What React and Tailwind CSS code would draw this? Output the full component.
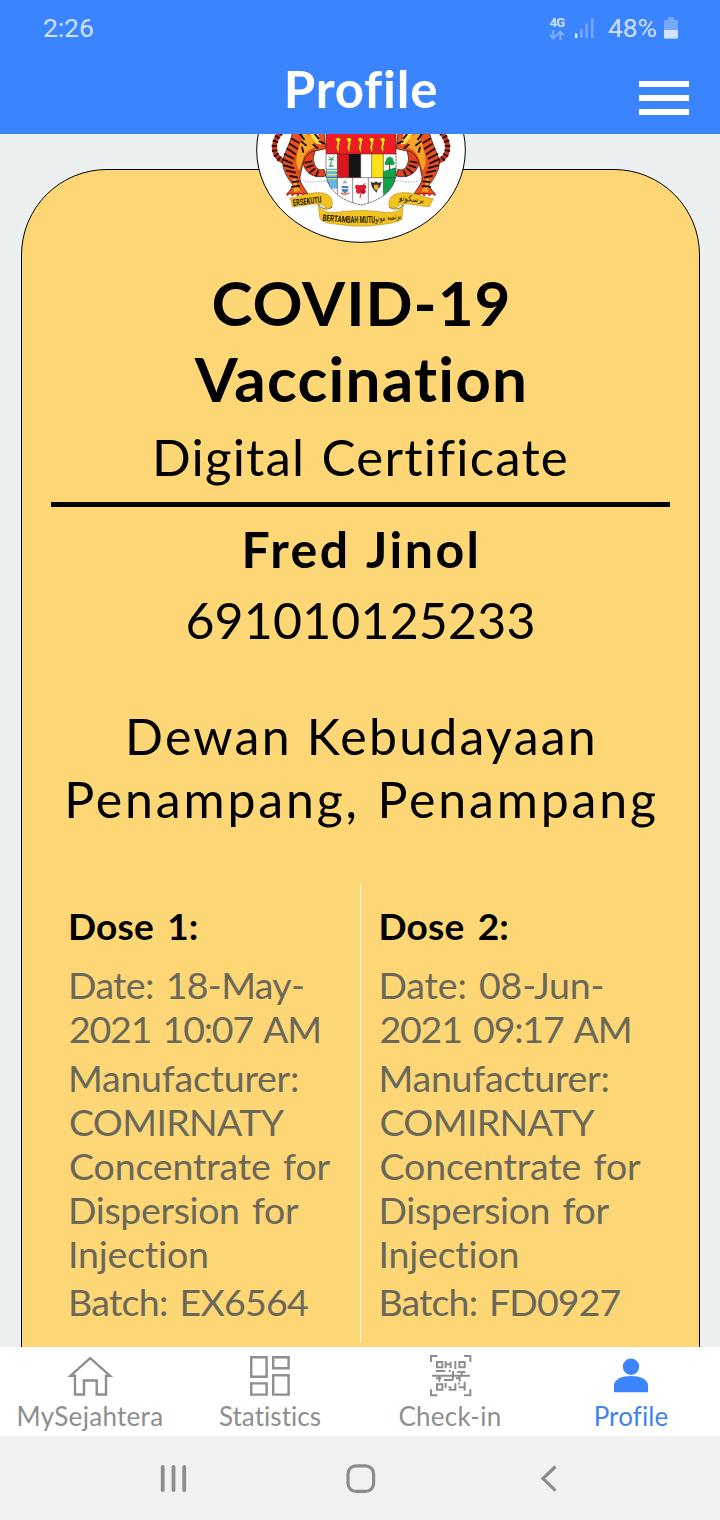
import React from "react";

const DOSES = [
  {
    title: "Dose 1:",
    date: [
      { text: "Date: 18-May-", cls: "tracking-[-0.65px]" },
      { text: "2021 10:07 AM", cls: "pl-px tracking-[-1.2px]" },
    ],
    batch: { text: "Batch: EX6564", cls: "tracking-[-0.72px]" },
  },
  {
    title: "Dose 2:",
    date: [
      { text: "Date: 08-Jun-", cls: "tracking-[-0.17px]" },
      { text: "2021 09:17 AM", cls: "pl-px tracking-[-1.2px]" },
    ],
    batch: { text: "Batch: FD0927", cls: "tracking-[-0.87px]" },
  },
];

const MANUFACTURER = [
  { text: "Manufacturer:", cls: "tracking-[-0.25px]" },
  { text: "COMIRNATY", cls: "pl-px tracking-[-0.65px]" },
  { text: "Concentrate for", cls: "pl-px tracking-[-0.15px]" },
  { text: "Dispersion for", cls: "tracking-[-0.35px]" },
  { text: "Injection", cls: "tracking-[-0.2px]" },
];

function Lines({ items, className = "" }) {
  return (
    <p className={`text-[37.5px] leading-[44px] text-[#6b6859] [word-spacing:3px] ${className}`}>
      {items.map((l) => (
        <span key={l.text} className={`block whitespace-nowrap ${l.cls}`}>
          {l.text}
        </span>
      ))}
    </p>
  );
}

function Dose({ dose, className }) {
  return (
    <section className={`pt-5 pb-[18.5px] ${className}`}>
      <h3 className="text-[37px] leading-[44px] font-bold text-black tracking-[0.2px] [word-spacing:4px]">{dose.title}</h3>
      <Lines items={dose.date} className="mt-[14.5px]" />
      <Lines items={MANUFACTURER} className="mt-[5.5px]" />
      <Lines items={[dose.batch]} className="mt-[3.5px]" />
    </section>
  );
}

function Tiger() {
  return (
    <g>
      <path d="M92 8C72 28 66 62 84 82C92 92 104 94 116 92" fill="none" stroke="#c8321e" strokeWidth="15" />
      <path d="M92 8C72 28 66 62 84 82C92 92 104 94 116 92" fill="none" stroke="#1c0d08" strokeWidth="17" strokeDasharray="5 9" />
      <path d="M156 80C158 118 178 148 228 138L222 118C204 124 192 112 190 84L196 58L160 60Z" fill="#e2431f" stroke="#1c0d08" strokeWidth="2" />
      <path d="M128 6H222L227 56L200 62C176 62 164 80 158 104L150 140C148 158 162 172 174 192H112L130 166C112 144 94 116 99 88C108 60 120 40 128 6Z" fill="#e8501f" stroke="#1c0d08" strokeWidth="2" />
      <path d="M160 6L186 20L196 52C180 56 168 66 160 84L148 122C138 110 136 90 144 62Z" fill="#f7a325" />
      <path d="M176 8L204 10L214 44L196 40Z" fill="#ffe04a" />
      <path d="M128 150C136 140 142 150 140 166L152 184L132 186Z" fill="#f7a325" />
      <g fill="none" stroke="#1c0d08" strokeWidth="5.500" strokeLinecap="round">
        <path d="M126 26L146 38M120 42L142 56M112 56L136 72M104 72L130 86M100 88L126 100M102 106L130 114M110 122L136 128M120 138L142 142M150 12L162 28M154 34L168 46M156 52L160 66M196 14L206 26M208 34L222 40M190 44L202 54" />
        <path d="M128 156L146 154M126 170L148 168M166 98L184 94M170 112L188 106M180 128L194 116M198 138L204 124" />
      </g>
      <path d="M148 120C146 148 160 158 190 156C212 156 226 146 236 160" fill="none" stroke="#555" strokeWidth="1.5" strokeDasharray="4 4" />
      <path d="M116 188L110 196M130 190L126 198M146 190L142 198M162 188L160 196" stroke="#d8261c" strokeWidth="6" />
    </g>
  );
}

function Keris({ x }) {
  return (
    <path
      d={`M${x - 9} 27C${x - 2} 21 ${x + 6} 23 ${x + 7} 30L${x + 3} 35C${x + 7} 42 ${x - 2} 48 ${x + 2} 56L${x} 69L${x - 5} 56C${x - 8} 48 ${x} 42 ${x - 4} 35Z`}
      fill="#ffe11a"
      stroke="#5b3b00"
      strokeWidth="1"
    />
  );
}

function Emblem() {
  return (
    <svg className="absolute -top-1 left-[250px] h-[120px] w-[220px] overflow-visible" viewBox="0 0 660 360">
      <defs>
        <clipPath id="shield">
          <path d="M228 0H438V128C438 176 396 212 333 225C270 212 228 176 228 128Z" />
        </clipPath>
      </defs>
      <ellipse cx="333" cy="60" rx="313" ry="277" fill="#fff" stroke="#000" strokeWidth="3" />
      <Tiger />
      <g transform="matrix(-1 0 0 1 666 0)">
        <Tiger />
      </g>
      <g clipPath="url(#shield)">
        <rect x="228" width="210" height="230" fill="#fff" />
        <rect x="228" width="210" height="72" fill="#ee1c25" />
        <rect x="262" y="72" width="35" height="71" fill="#d8181f" />
        <rect x="297" y="72" width="35" height="71" fill="#161316" />
        <rect x="365" y="72" width="35" height="71" fill="#ffe216" />
        <rect x="228" y="116" width="34" height="60" fill="#5fb8e6" />
        <path d="M228 122H262M228 134H262M228 146H262" stroke="#f4e66a" strokeWidth="4" />
        <path d="M242 110L244 86M244 86L236 80M244 86L253 80M244 86L235 90M244 86L253 91M236 108H252" stroke="#1f9447" strokeWidth="3" fill="none" />
        <path d="M400 124L438 112V230H400Z" fill="#12a04b" />
        <circle cx="419" cy="92" r="11" fill="#12a04b" />
        <circle cx="411" cy="99" r="7" fill="#12a04b" />
        <circle cx="427" cy="99" r="7" fill="#12a04b" />
        <path d="M419 98V120" stroke="#4b3a12" strokeWidth="3" />
        <path d="M228 72H438M228 143H438M262 72V200M297 72V143M332 72V143M365 72V143M400 72V190M308 143V225M355 143V225" stroke="#222" strokeWidth="1.5" />
        <path d="M275 168H295V176C295 186 285 190 285 190C285 190 275 186 275 176Z" fill="#4a7fc8" />
        <path d="M275 176H295" stroke="#fff" strokeWidth="3" />
        <path d="M277 160L285 150L293 160Z" fill="#9aa8c8" />
        <path d="M272 188C280 194 290 194 298 188" stroke="#e1603a" strokeWidth="4" fill="none" />
        <circle cx="332" cy="173" r="8" fill="#e01b2e" />
        <circle cx="322" cy="171" r="7" fill="#e01b2e" />
        <circle cx="342" cy="171" r="7" fill="#e01b2e" />
        <circle cx="326" cy="183" r="8" fill="#e01b2e" />
        <circle cx="339" cy="184" r="8" fill="#c8142a" />
        <path d="M333 190L330 204M338 166L346 160" stroke="#e01b2e" strokeWidth="3" />
        <path d="M362 156L372 158L378 154L384 158L395 156L390 172L383 176L380 188L374 182L366 172Z" fill="#3a3230" />
        <path d="M372 164H385V174L378 182L372 174Z" fill="#e9b424" />
      </g>
      <path d="M228 0H438V128C438 176 396 212 333 225C270 212 228 176 228 128Z" fill="none" stroke="#222" strokeWidth="2" strokeDasharray="7 2" />
      {[265, 298, 332, 366, 399].map((x) => (
        <Keris key={x} x={x} />
      ))}
      <g fill="#f3c31f" stroke="#7a5a06" strokeWidth="1">
        <path d="M128 231L120 204C150 202 172 186 212 188C240 190 252 206 246 232L226 234C222 226 214 222 200 222C176 222 160 228 128 231Z" />
        <path d="M538 231L550 206C516 202 494 186 454 188C426 190 412 206 418 232L440 234C444 226 452 222 466 222C490 222 506 228 538 231Z" />
        <path d="M204 222C212 246 240 250 268 246C310 240 356 240 398 246C426 250 452 246 460 222L456 268C440 278 416 282 392 284C350 290 312 290 272 284C246 282 222 280 210 268Z" />
      </g>
      <path d="M206 224C218 242 236 238 246 232M460 224C446 242 430 238 418 232" fill="none" stroke="#8a6a08" strokeWidth="3" />
      <g fill="#1d1708" className="font-['Roboto']" fontWeight="700">
        <text x="130" y="228" fontSize="27" transform="rotate(-7 130 228)" textLength="86" lengthAdjust="spacingAndGlyphs">ERSEKUTU</text>
        <text x="217" y="272" fontSize="27" transform="rotate(5 217 272)" textLength="74" lengthAdjust="spacingAndGlyphs">BERTAM</text>
        <text x="291" y="279" fontSize="27" textLength="84" lengthAdjust="spacingAndGlyphs">BAH MUTU</text>
      </g>
      <g fill="#1d1708" className="font-['DejaVu_Sans']">
        <text x="376" y="275" fontSize="27" transform="rotate(-7 376 275)" textLength="78" lengthAdjust="spacingAndGlyphs">برتمبه موتو</text>
        <text x="446" y="211" fontSize="25" transform="rotate(6 446 211)" textLength="76" lengthAdjust="spacingAndGlyphs">برسكوتو</text>
      </g>
    </svg>
  );
}

function StatusBar() {
  return (
    <div className="flex h-14 items-center pr-[42px] pl-[43px] font-['Roboto'] text-[#cfe0ff]">
      <span className="flex-1 text-[26.5px] leading-none tracking-[-0.1px]">2:26</span>
      <span className="flex w-4 flex-col items-center gap-px">
        <span className="text-[13px] leading-[12px] font-bold tracking-[-0.6px]">4G</span>
        <svg className="h-[10px] w-4" viewBox="0 0 16 10" fill="none" stroke="#86b1ff" strokeWidth="1.8">
          <path d="M4.3 0V8M1 5L4.3 8.4L7.6 5M11.3 10V1.8M8 5L11.3 1.6L14.6 5" />
        </svg>
      </span>
      <svg className="ml-[9px] h-[21px] w-5" viewBox="0 0 20 21">
        <rect x="1" y="15.5" width="2.3" height="4.5" fill="#eaf2ff" />
        <path d="M6.2 11h2.4v9H6.200zM11.400 5.500h2.400v14.500h-2.400zM17 .5h2.400v19.500H17z" fill="#7aa9ff" />
      </svg>
      <span className="ml-[14px] w-[49px] text-[26.5px] leading-none tracking-[-0.2px]">48%</span>
      <svg className="ml-[7px] h-[22px] w-[14px]" viewBox="0 0 14 22">
        <path d="M4 0h6v3h3a1 1 0 0 1 1 1v16.500a1 1 0 0 1-1 1H1a1 1 0 0 1-1-1V4a1 1 0 0 1 1-1h3z" fill="#76a8ff" />
        <path d="M0 13h14v7.500a1 1 0 0 1-1 1H1a1 1 0 0 1-1-1z" fill="#d3e3ff" />
      </svg>
    </div>
  );
}

function HomeIcon() {
  return (
    <svg className="h-[46px] w-[50px]" viewBox="65 1353 50 46" fill="none" stroke="#8e8e8e" strokeWidth="2.4">
      <path d="M90.200 1358.200L110 1375.700H106V1394.500H96.700V1380.500H84V1394.500H75V1375.700H70.500Z" />
    </svg>
  );
}

function StatsIcon() {
  return (
    <svg className="h-[46px] w-[50px]" viewBox="245 1353 50 46" fill="none" stroke="#8e8e8e" strokeWidth="2.4">
      <path d="M251.200 1357.200h15.400v19.600h-15.400zM251.200 1383.400h15.400v11.200h-15.400zM273.200 1357.200h15.400v11h-15.400zM273.200 1375.200h15.400v19.400h-15.400z" />
    </svg>
  );
}

function QrIcon() {
  return (
    <svg className="h-[46px] w-[50px]" viewBox="-15 -6 150 138" fill="none" stroke="#8e8e8e" strokeWidth="6">
      <path d="M3 21V3H22M102 3H121V21M3 103V121H22M102 121H121V103" strokeWidth="6" />
      <path d="M21 21H37V37H21ZM88 21H104V37H88ZM21 88H37V104H21Z" />
      <path d="M47 18V39M47 28H62M62 20V39M76 18V42" />
      <path d="M18 48H46M56 48H62M69 48V72M82 51H106M95 51V60" />
      <path d="M6 62H120" />
      <path d="M18 70H34M28 62V80M42 75H70M89 62V80M78 70H88" />
      <path d="M47 84V98M56 96L64 98M56 104H76V85M84 86H90M86 97H104M104 80V107" />
    </svg>
  );
}

function PersonIcon() {
  return (
    <svg className="h-[46px] w-[50px]" viewBox="606 1353 50 46" fill="#3a84ff">
      <circle cx="631" cy="1366.700" r="8.200" />
      <path d="M614 1392.200V1385.500C614 1379 622.500 1376 631 1376S648 1379 648 1385.500V1392.200Z" />
    </svg>
  );
}

const TABS = [
  { label: "MySejahtera", Icon: HomeIcon, cls: "text-[#8e8e8e] tracking-[0.3px]" },
  { label: "Statistics", Icon: StatsIcon, cls: "text-[#8e8e8e] tracking-[0.05px]" },
  { label: "Check-in", Icon: QrIcon, cls: "text-[#8e8e8e] tracking-[0.25px]" },
  { label: "Profile", Icon: PersonIcon, cls: "pl-0.5 text-[#3f83f0] tracking-[0.1px]" },
];

export default function App() {
  return (
    <div className="flex h-[1520px] w-[720px] flex-col overflow-hidden bg-[#ebefef] font-['Lato',sans-serif] [font-variant-ligatures:none]">
      <header className="h-[134px] shrink-0 bg-[#3a84ff]">
        <StatusBar />
        <div className="grid grid-cols-[1fr_auto_1fr] items-start">
          <h1 className="col-start-2 pt-0.5 pl-0.5 text-[51px] leading-[62px] font-bold tracking-[0.75px] text-white">Profile</h1>
          <button className="mt-[25px] mr-[31px] flex w-[50px] flex-col gap-2 justify-self-end" aria-label="Menu">
            <span className="h-1.5 w-full bg-white" />
            <span className="h-1.5 w-full bg-white" />
            <span className="h-1.5 w-full bg-white" />
          </button>
        </div>
      </header>

      <main className="relative h-[1213px] shrink-0 overflow-hidden pt-[35px] pr-5 pl-[21px]">
        <article className="h-[1300px] rounded-t-[86px] border border-black bg-[#fdd775] px-[29px] pt-[94px] text-center text-black shadow-[0_0_10px_rgba(255,255,255,0.35)]">
          <h2 className="pl-0.5 text-[62px] leading-[76px] font-bold">
            <span className="block tracking-[0.95px]">COVID-19</span>
            <span className="block tracking-[1.22px]">Vaccination</span>
          </h2>
          <p className="mt-2.5 text-[51px] leading-[62px] tracking-[1.2px] [word-spacing:2px]">Digital Certificate</p>
          <hr className="mt-3.5 h-[5px] border-0 bg-black" />
          <p className="mt-[11px] pl-0.5 text-[50px] leading-[62px] font-bold tracking-[2.5px] [word-spacing:2px]">Fred Jinol</p>
          <p className="mt-[9px] text-[50px] leading-[62px] tracking-[0.18px]">691010125233</p>
          <p className="mt-[53.5px] pl-0.5 text-[50px] leading-[63px] whitespace-nowrap">
            <span className="block tracking-[2.25px]">Dewan Kebudayaan</span>
            <span className="block tracking-[2.85px] [word-spacing:2px]">Penampang, Penampang</span>
          </p>
          <div className="mt-[53.5px] grid grid-cols-[309px_1fr] text-left">
            <Dose dose={DOSES[0]} className="pl-[17px]" />
            <Dose dose={DOSES[1]} className="border-l border-[#fffbe8] pl-[17.5px]" />
          </div>
        </article>
        <Emblem />
      </main>

      <nav className="grid h-[89px] shrink-0 grid-cols-4 bg-white">
        {TABS.map(({ label, Icon, cls }) => (
          <a key={label} className={`flex flex-col items-center pt-1.5 text-[26px] leading-[34px] ${cls}`}>
            <Icon />
            <span>{label}</span>
          </a>
        ))}
      </nav>

      <footer className="flex h-[84px] shrink-0 items-center justify-between bg-[#f1f1f1] px-[158px]">
        <svg className="h-8 w-[30px]" viewBox="158 1462 30 32" stroke="#8c8c8c" strokeWidth="3.800" strokeLinecap="round">
          <path d="M162.700 1467V1490M173.500 1467V1490M184.200 1467V1490" />
        </svg>
        <svg className="h-8 w-8" viewBox="345 1462 32 32" fill="none" stroke="#8c8c8c" strokeWidth="3.200">
          <rect x="348" y="1465.800" width="25.600" height="25.600" rx="8" />
        </svg>
        <svg className="h-8 w-7" viewBox="534 1462 28 32" fill="none" stroke="#8c8c8c" strokeWidth="3.200">
          <path d="M555.500 1466.500L543 1478.600L555.500 1490.700" />
        </svg>
      </footer>
    </div>
  );
}
